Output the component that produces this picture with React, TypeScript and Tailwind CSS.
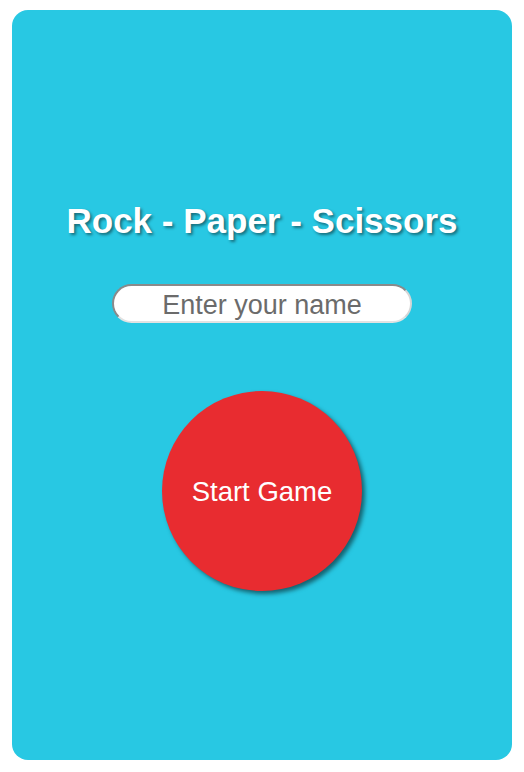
const App = () => {
  return (
    <div className="min-h-screen bg-white px-[12px] pt-[10px] pb-[12px] font-['Liberation_Sans',Arial,sans-serif]">
      <div className="h-[750px] w-[500px] rounded-[16px] bg-[#28c8e3] flex flex-col items-center pt-[191px]">
        <h1 className="text-[35px] leading-[40px] font-bold text-white [text-shadow:2px_2px_3px_rgba(0,0,0,0.45)]">
          Rock - Paper - Scissors
        </h1>

        <input
          type="text"
          placeholder="Enter your name"
          className="mt-[43px] w-[300px] h-[39px] pt-[3px] rounded-full bg-white border-2 border-t-[#8a8a8a] border-l-[#8a8a8a] border-r-[#d6d6d6] border-b-[#e2e2e2] text-center text-[27px] text-[#333] placeholder-[#6b6b6b] outline-none"
        />

        <button className="mt-[68px] w-[200px] h-[200px] rounded-full bg-[#e82c30] text-white text-[27.5px] pt-[2px] [box-shadow:3px_3px_4px_rgba(0,0,0,0.5)]">
          Start Game
        </button>
      </div>
    </div>
  );
};

export default App;
